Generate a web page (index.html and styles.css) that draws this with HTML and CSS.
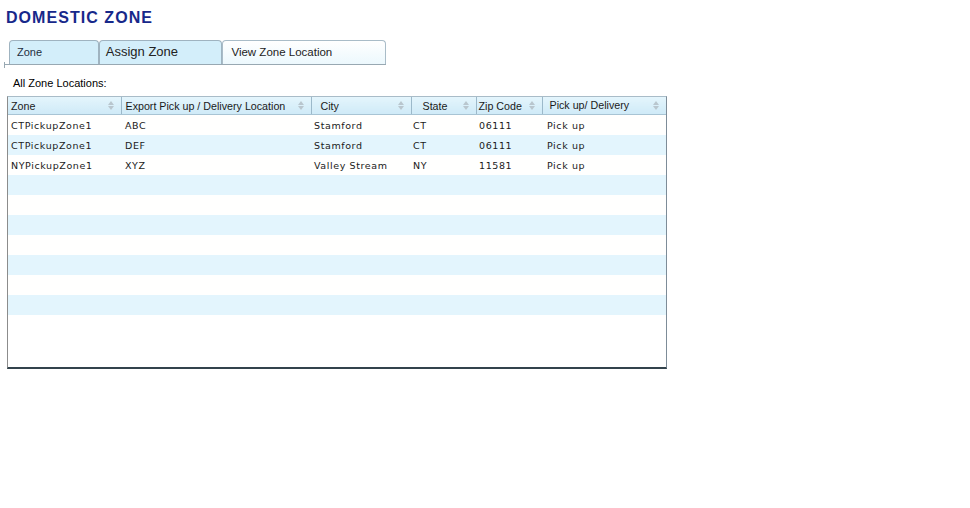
FILE: index.html
```html
<!DOCTYPE html>
<html>
<head>
<meta charset="utf-8">
<link rel="stylesheet" href="styles.css">
</head>
<body>
<h1 class="title">DOMESTIC ZONE</h1>
<div class="tabbar">
  <div class="tab tab-zone">Zone</div>
  <div class="tab tab-assign">Assign Zone</div>
  <div class="tab tab-active">View Zone Location</div>
</div>
<div class="caption">All Zone Locations:</div>
<div class="grid">
  <table class="zones">
    <colgroup>
      <col class="c1"><col class="c2"><col class="c3"><col class="c4"><col class="c5"><col class="c6">
    </colgroup>
    <thead>
      <tr>
        <th><span>Zone</span><i class="sort"></i></th>
        <th><span>Export Pick up / Delivery Location</span><i class="sort"></i></th>
        <th><span>City</span><i class="sort"></i></th>
        <th><span>State</span><i class="sort"></i></th>
        <th><span>Zip Code</span><i class="sort"></i></th>
        <th><span>Pick up/ Delivery</span><i class="sort"></i></th>
      </tr>
    </thead>
    <tbody>
      <tr><td>CTPickupZone1</td><td>ABC</td><td>Stamford</td><td>CT</td><td>06111</td><td>Pick up</td></tr>
      <tr class="alt"><td>CTPickupZone1</td><td>DEF</td><td>Stamford</td><td>CT</td><td>06111</td><td>Pick up</td></tr>
      <tr><td>NYPickupZone1</td><td>XYZ</td><td>Valley Stream</td><td>NY</td><td>11581</td><td>Pick up</td></tr>
      <tr class="alt"><td></td><td></td><td></td><td></td><td></td><td></td></tr>
      <tr><td></td><td></td><td></td><td></td><td></td><td></td></tr>
      <tr class="alt"><td></td><td></td><td></td><td></td><td></td><td></td></tr>
      <tr><td></td><td></td><td></td><td></td><td></td><td></td></tr>
      <tr class="alt"><td></td><td></td><td></td><td></td><td></td><td></td></tr>
      <tr><td></td><td></td><td></td><td></td><td></td><td></td></tr>
      <tr class="alt"><td></td><td></td><td></td><td></td><td></td><td></td></tr>
    </tbody>
  </table>
</div>
</body>
</html>
```

FILE: styles.css
```css
html, body {
  margin: 0;
  padding: 0;
  background: #ffffff;
}
body {
  font-family: "Liberation Sans", Arial, sans-serif;
  color: #000;
}
.title {
  margin: 0;
  padding: 9px 0 0 6px;
  height: 22px;
  font-size: 16px;
  font-weight: bold;
  letter-spacing: 1.05px;
  color: #17288a;
  line-height: 17px;
}
.tabbar {
  display: flex;
  margin: 9px 0 0 4px;
  width: 382px;
  height: 25px;
  padding-left: 5px;
  box-sizing: border-box;
  border-bottom: 1px solid #98a8b2;
  align-items: flex-end;
  position: relative;
}
.tabbar::before {
  content: "";
  position: absolute;
  left: 0;
  bottom: -4px;
  width: 1px;
  height: 6px;
  background: #98a8b2;
}
.tab {
  box-sizing: border-box;
  height: 24px;
  border: 1px solid #9fb3c0;
  border-bottom: none;
  border-radius: 4px 4px 0 0;
  background: #d3eefa;
  color: #1f2f3f;
  line-height: 22px;
  font-size: 11px;
  padding-left: 7px;
}
.tab-zone { width: 90px; }
.tab-assign { width: 124px; font-size: 13px; padding-left: 6px; color: #222; }
.tab-active {
  width: 164px;
  background: linear-gradient(#ffffff, #ecf8fd);
  padding-left: 8px;
  color: #222;
  font-size: 11.5px;
  border-color: #a9bcc8;
}
.caption {
  margin: 11px 0 0 13px;
  font-size: 11px;
  height: 20px;
  line-height: 14px;
}
.grid {
  margin-left: 7px;
  width: 660px;
  height: 273px;
  box-sizing: border-box;
  border-top: 1px solid #a9bcc8;
  border-left: 1px solid #8c8c8c;
  border-right: 1px solid #7d8c98;
  border-bottom: 2px solid #33434c;
  background: #fff;
}
.zones {
  border-collapse: collapse;
  table-layout: fixed;
  width: 658px;
}
.c1 { width: 113px; }
.c2 { width: 190px; }
.c3 { width: 100px; }
.c4 { width: 65px; }
.c5 { width: 66px; }
.c6 { width: 124px; }
.zones th {
  height: 17px;
  padding: 0;
  box-sizing: border-box;
  background: linear-gradient(#e4f5fc, #cfeaf7);
  border-right: 1px solid #9cb9ca;
  border-bottom: 1px solid #a8c4d4;
  font-weight: normal;
  font-size: 10.7px;
  text-align: left;
  color: #1a1a1a;
  position: relative;
  white-space: nowrap;
}
.zones th:last-child { border-right: none; }
.zones th span { display: inline-block; padding-left: 3px; padding-top: 1px; line-height: 16px; }
.zones th:nth-child(2) span { padding-left: 4px; }
.zones th:nth-child(3) span { padding-left: 9px; }
.zones th:nth-child(4) span { padding-left: 11px; }
.zones th:nth-child(5) span { padding-left: 2px; }
.zones th:nth-child(6) span { padding-left: 7px; position: relative; top: -1px; }
.sort {
  position: absolute;
  right: 6px;
  top: 4px;
  width: 7px;
  height: 9px;
}
.sort::before, .sort::after {
  content: "";
  position: absolute;
  left: 0;
  border-left: 3.5px solid transparent;
  border-right: 3.5px solid transparent;
}
.sort::before { top: 0; border-bottom: 4px solid #b9c6ce; }
.sort::after { top: 5px; border-top: 4px solid #b9c6ce; }
.zones td {
  height: 20px;
  padding: 0 0 0 3px;
  font-family: "DejaVu Sans", Verdana, sans-serif;
  font-size: 9.5px;
  letter-spacing: 0.6px;
  color: #1a1a1a;
  white-space: nowrap;
  overflow: hidden;
  vertical-align: middle;
}
.zones td:nth-child(2) { padding-left: 4px; }
.zones td:nth-child(4) { padding-left: 2px; }
.zones td:nth-child(6) { padding-left: 5px; }
.zones tbody tr { background: #fffffe; }
.zones tbody tr.alt { background: #e3f5fd; }
```
